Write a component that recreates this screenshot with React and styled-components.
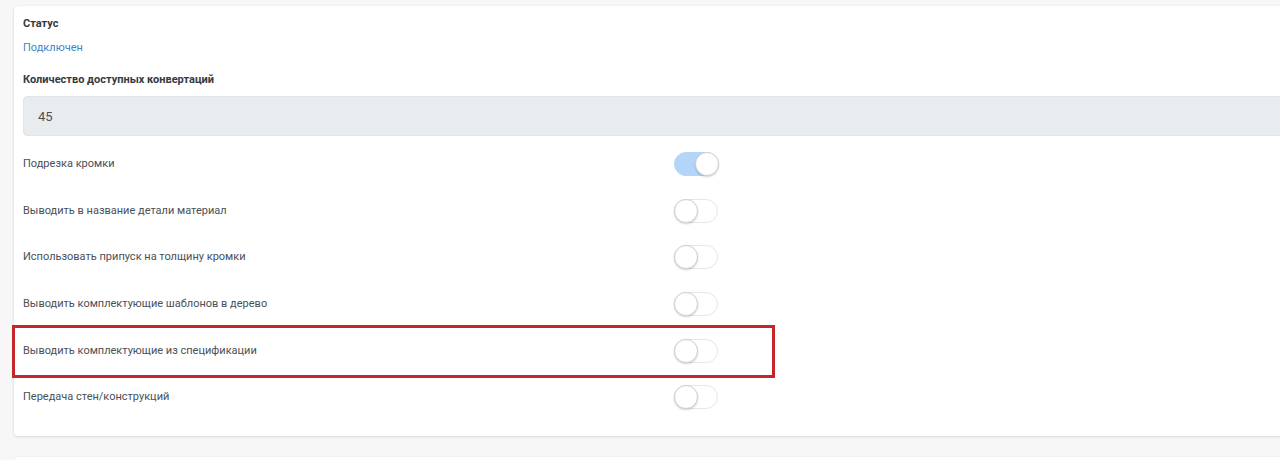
import React from "react";
import styled, { createGlobalStyle, css } from "styled-components";

const GlobalStyle = createGlobalStyle`
  html, body { margin: 0; padding: 0; background: #f7f7f7; }
  body { font-family: Roboto, "Liberation Sans", Arial, sans-serif; }
  * { box-sizing: border-box; }
`;

const Page = styled.div`
  height: 460px;
  overflow: hidden;
  padding: 6px 0 0 14px;
`;

const Card = styled.section`
  width: 1300px;
  background: #ffffff;
  border-radius: 4px;
  box-shadow: 0 1px 3px rgba(0, 0, 0, 0.12), 0 0 1px rgba(0, 0, 0, 0.08);
  padding: ${(p) => p.$padding || "10px 0 15px 9px"};
  & + & {
    margin-top: 21px;
    min-height: 40px;
  }
`;

const FieldLabel = styled.div`
  font-size: 11px;
  line-height: 16px;
  font-weight: 700;
  color: #343a40;
`;

const StatusValue = styled.div`
  margin-top: 8px;
  font-size: 11px;
  line-height: 16px;
  color: #3d85c6;
`;

const Field = styled.div`
  & + & {
    margin-top: 16px;
  }
`;

const NumberInput = styled.div`
  margin-top: 8px;
  height: 40px;
  border-radius: 4px;
  background: #e9ecef;
  border: 1px solid #e2e5e8;
  display: flex;
  align-items: center;
  padding-left: 14px;
  font-size: 13px;
  color: #495057;
`;

const ToggleList = styled.div`
  margin-top: 5px;
  display: flex;
  flex-direction: column;
`;

const Row = styled.div`
  position: relative;
  height: 46.6px;
  display: grid;
  grid-template-columns: 651px 44px;
  align-items: center;
  ${(p) =>
    p.$highlighted &&
    css`
      &::after {
        content: "";
        position: absolute;
        left: -11px;
        top: -2px;
        width: 757px;
        height: 47px;
        border: 3px solid #c4262c;
        pointer-events: none;
      }
    `}
`;

const RowLabel = styled.span`
  font-size: 11px;
  line-height: 16px;
  color: #495057;
`;

const Switch = styled.span`
  position: relative;
  display: block;
  width: 44px;
  height: 24px;
  border-radius: 12px;
  background: ${(p) => (p.$on ? "#b3d6f8" : "#ffffff")};
  border: 1px solid ${(p) => (p.$on ? "#b3d6f8" : "#e6e6e6")};
`;

const Knob = styled.span`
  position: absolute;
  top: -1px;
  left: ${(p) => (p.$on ? "20px" : "-1px")};
  width: 24px;
  height: 24px;
  border-radius: 50%;
  background: #ffffff;
  border: 1px solid #d0d0d0;
  box-shadow: 0 1px 2px rgba(0, 0, 0, 0.18);
`;

const toggles = [
  { label: "Подрезка кромки", on: true },
  { label: "Выводить в название детали материал", on: false },
  { label: "Использовать припуск на толщину кромки", on: false },
  { label: "Выводить комплектующие шаблонов в дерево", on: false },
  { label: "Выводить комплектующие из спецификации", on: false, highlighted: true },
  { label: "Передача стен/конструкций", on: false },
];

export default function App() {
  return (
    <>
      <GlobalStyle />
      <Page>
        <Card>
          <Field>
            <FieldLabel>Статус</FieldLabel>
            <StatusValue>Подключен</StatusValue>
          </Field>
          <Field>
            <FieldLabel>Количество доступных конвертаций</FieldLabel>
            <NumberInput>45</NumberInput>
          </Field>
          <ToggleList>
            {toggles.map((t) => (
              <Row key={t.label} $highlighted={t.highlighted}>
                <RowLabel>{t.label}</RowLabel>
                <Switch $on={t.on}>
                  <Knob $on={t.on} />
                </Switch>
              </Row>
            ))}
          </ToggleList>
        </Card>
        <Card $padding="0" />
      </Page>
    </>
  );
}
